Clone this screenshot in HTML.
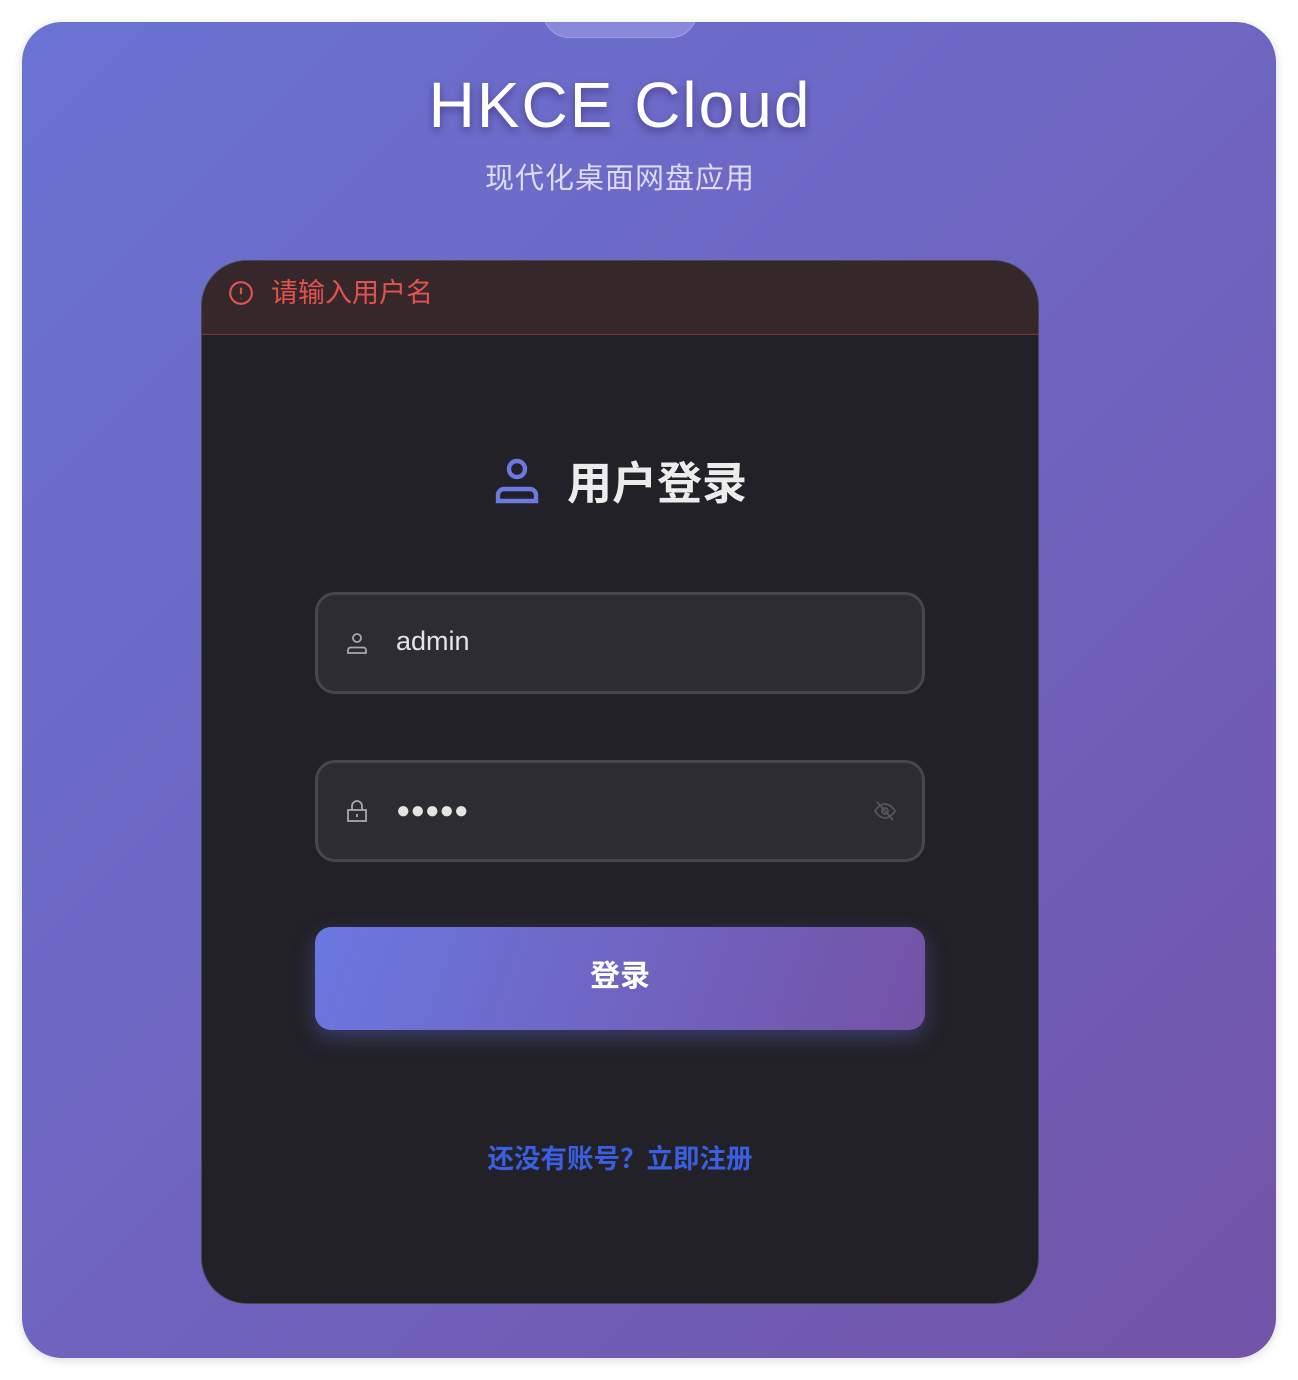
<!DOCTYPE html>
<html><head><meta charset="utf-8"><style>
*{margin:0;padding:0;box-sizing:border-box}
body{width:1298px;height:1380px;background:#fff;position:relative;overflow:hidden;font-family:"Liberation Sans","Noto Sans CJK SC",sans-serif}
.bg{position:absolute;left:22px;top:22px;width:1254px;height:1336px;border-radius:40px;background:linear-gradient(135deg,#6a72d2 0%,#6e65c0 50%,#7253a8 100%);box-shadow:0 2px 10px rgba(0,0,0,.15);overflow:hidden}
.tab{position:absolute;left:521px;top:-20px;width:154px;height:36px;border-radius:0 0 26px 26px;background:#8a88d8;border:1.5px solid #a09ee6}
h1{position:absolute;left:0;width:1196px;top:46px;text-align:center;color:#fff;font-size:64px;font-weight:500;letter-spacing:2px;text-shadow:0 4px 8px rgba(40,30,90,.5)}
.sub{position:absolute;left:0;width:1196px;top:133px;text-align:center;color:#dcdaf4;font-size:29px;letter-spacing:1px}
.card{position:absolute;left:201px;top:260px;width:838px;height:1044px;border-radius:46px;background:#222127;border:1.5px solid #4a4950;overflow:hidden}
.err{height:74px;background:#36272a;border-bottom:1.5px solid #7a3535;position:relative}
.err span{position:absolute;left:69px;top:10px;color:#e2534f;font-size:27px}
.err svg{position:absolute;left:26px;top:19px}
.title{position:absolute;left:0;width:100%;top:186px;text-align:center;color:#ececec;font-size:45px;font-weight:bold}
.title svg{vertical-align:-5px;margin-right:26px}
.inp{position:absolute;left:113px;width:610px;height:102px;border-radius:20px;background:#2d2c32;border:3px solid #47464c}
.inp .t{position:absolute;left:78px;top:31px;color:#e4e4e4;font-size:27px}
.inp svg{position:absolute;left:27px;top:36px}
.btn{position:absolute;left:113px;top:666px;width:610px;height:103px;border-radius:16px;background:linear-gradient(110deg,#6a78e0,#7452a5);box-shadow:0 8px 22px rgba(102,110,230,.35);color:#fff;font-size:30px;font-weight:bold;text-align:center;line-height:100px}
.link{position:absolute;left:0;width:100%;top:876px;text-align:center;color:#3a5fe0;font-size:26.5px;font-weight:bold}
</style></head><body>
<div class="bg">
<div class="tab"></div>
<h1>HKCE Cloud</h1>
<div class="sub">现代化桌面网盘应用</div>
</div>
<div class="card">
<div class="err"><svg width="26" height="26" viewBox="0 0 24 24" fill="none" stroke="#e2534f" stroke-width="2"><circle cx="12" cy="12" r="10"/><path d="M12 7v6M12 16.5v.5"/></svg><span>请输入用户名</span></div>
<div class="title"><svg width="48" height="48" viewBox="0 0 24 24" fill="none" stroke="#6b7ae0" stroke-width="2.2"><circle cx="12" cy="6.5" r="4"/><path d="M2.5 22.5v-3a3 3 0 0 1 3-3h13a3 3 0 0 1 3 3v3z"/></svg>用户登录</div>
<div class="inp" style="top:331px"><svg width="24" height="24" viewBox="0 0 24 24" fill="none" stroke="#a8a8ae" stroke-width="1.8"><circle cx="12" cy="7" r="4"/><path d="M3 22v-3a2.5 2.5 0 0 1 2.5-2.5h13A2.5 2.5 0 0 1 21 19v3z"/></svg><div class="t">admin</div></div>
<div class="inp" style="top:499px"><svg width="24" height="24" viewBox="0 0 24 24" fill="none" stroke="#a8a8ae" stroke-width="1.8"><path d="M7 11V7a5 5 0 0 1 10 0v4"/><rect x="3" y="11" width="18" height="11"/><path d="M12 15v3"/></svg><div class="t" style="top:34px;font-size:24px;letter-spacing:0">●●●●●</div>
<svg style="left:555px" width="24" height="24" viewBox="0 0 24 24" fill="none" stroke="#55555c" stroke-width="1.8"><path d="M2 12s4-7 10-7 10 7 10 7-4 7-10 7S2 12 2 12z"/><circle cx="12" cy="12" r="3"/><path d="M4 3l16 18"/></svg></div>
<div class="btn">登录</div>
<div class="link">还没有账号？立即注册</div>
</div>
</body></html>
